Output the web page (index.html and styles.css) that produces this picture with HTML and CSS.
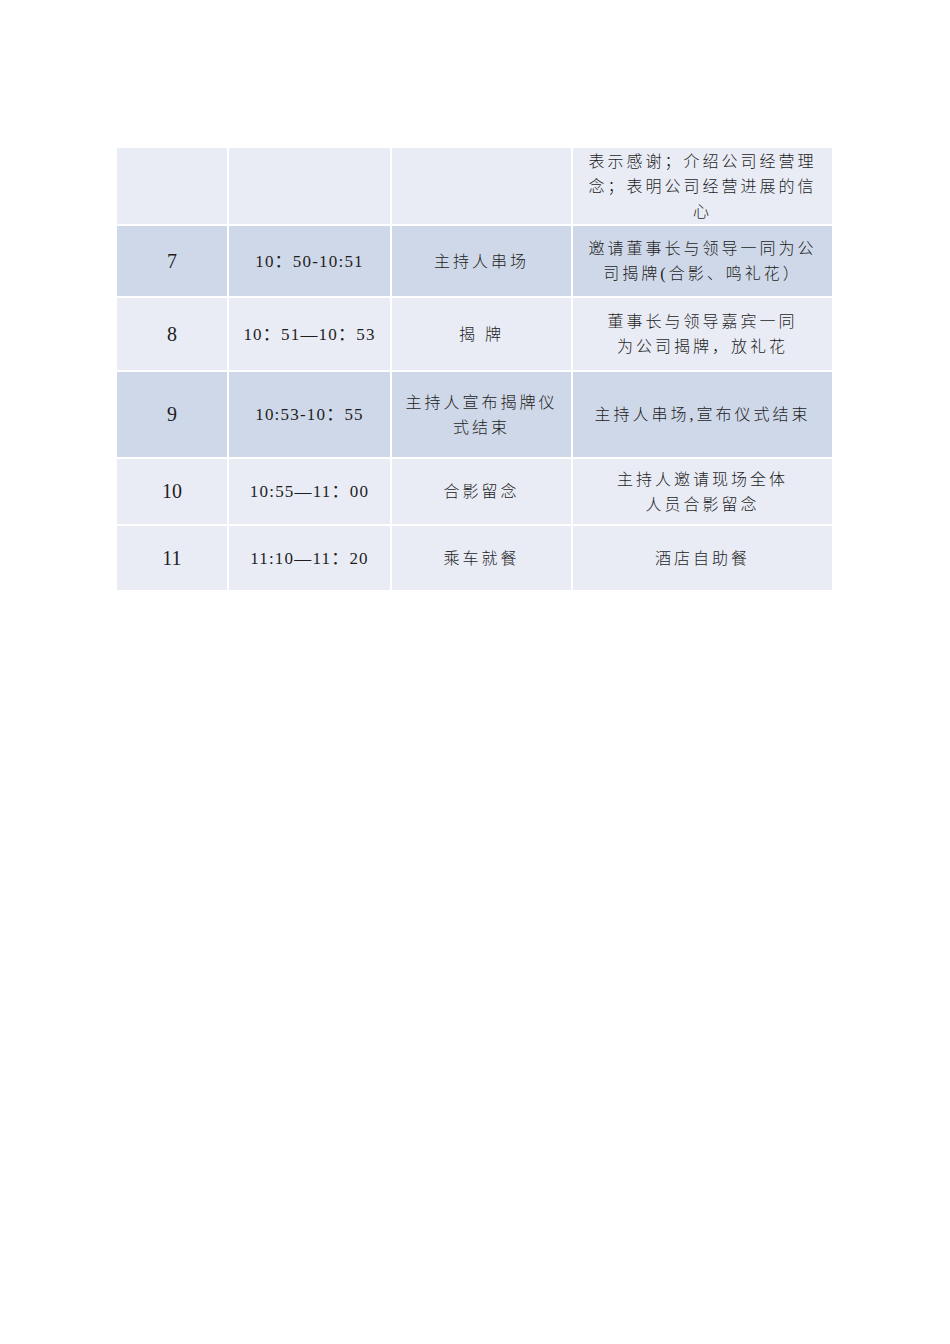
FILE: index.html
```html
<!DOCTYPE html>
<html lang="zh-CN">
<head>
<meta charset="utf-8">
<title>揭牌仪式流程</title>
<link rel="stylesheet" href="styles.css">
</head>
<body>
<div class="page">
  <table class="schedule">
    <colgroup>
      <col class="c-no">
      <col class="c-time">
      <col class="c-item">
      <col class="c-desc">
    </colgroup>
    <tbody>
      <tr class="light r-cont">
        <td class="no"></td>
        <td class="time"></td>
        <td class="item"></td>
        <td class="desc">表示感谢；介绍公司经营理念；表明公司经营进展的信心</td>
      </tr>
      <tr class="dark r7">
        <td class="no">7</td>
        <td class="time">10：50-10:51</td>
        <td class="item">主持人串场</td>
        <td class="desc">邀请董事长与领导一同为公司揭牌(合影、鸣礼花）</td>
      </tr>
      <tr class="light r8">
        <td class="no">8</td>
        <td class="time">10：51—10：53</td>
        <td class="item">揭 牌</td>
        <td class="desc">董事长与领导嘉宾一同<br>为公司揭牌，放礼花</td>
      </tr>
      <tr class="dark r9">
        <td class="no">9</td>
        <td class="time">10:53-10：55</td>
        <td class="item">主持人宣布揭牌仪式结束</td>
        <td class="desc">主持人串场,宣布仪式结束</td>
      </tr>
      <tr class="light r10">
        <td class="no">10</td>
        <td class="time">10:55—11：00</td>
        <td class="item">合影留念</td>
        <td class="desc">主持人邀请现场全体<br>人员合影留念</td>
      </tr>
      <tr class="light r11">
        <td class="no">11</td>
        <td class="time">11:10—11：20</td>
        <td class="item">乘车就餐</td>
        <td class="desc">酒店自助餐</td>
      </tr>
    </tbody>
  </table>
</div>
</body>
</html>
```

FILE: styles.css
```css
html, body {
  margin: 0;
  padding: 0;
  background: #ffffff;
}

.page {
  padding: 146px 0 0 115px;
}

.schedule {
  border-collapse: separate;
  border-spacing: 2px;
  table-layout: fixed;
  width: 719px;
  font-family: "Liberation Serif", "Noto Sans CJK SC", serif;
  font-weight: 300;
  color: #1e1e1e;
}

.c-no { width: 110px; }
.c-time { width: 161px; }
.c-item { width: 179px; }
.c-desc { width: 259px; }

.schedule td {
  padding: 0 8px;
  text-align: center;
  vertical-align: middle;
  font-size: 16px;
  line-height: 25px;
  letter-spacing: 3px;
  word-break: break-all;
}

.schedule td.no {
  font-size: 20px;
  font-weight: 400;
  letter-spacing: 0;
}

.schedule td.time {
  font-size: 17px;
  font-weight: 400;
  letter-spacing: 1.2px;
}

.light td { background: #e9ecf5; }
.dark td { background: #cfd8e8; }

.r-cont td { height: 76px; }
.r7 td { height: 70px; }
.r8 td { height: 72px; }
.r9 td { height: 85px; }
.r10 td { height: 65px; }
.r11 td { height: 64px; }
```
